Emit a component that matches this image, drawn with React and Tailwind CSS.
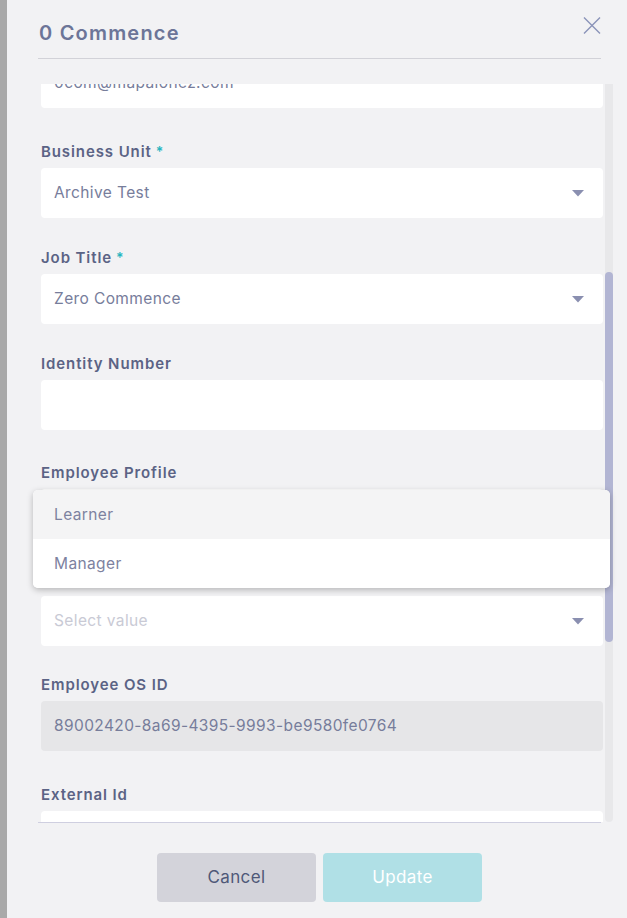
import React from "react";

const FONT = { fontFamily: "Inter, 'Open Sans', sans-serif" };

function Chevron() {
  return (
    <svg width="12" height="7" viewBox="0 0 12 7" className="shrink-0">
      <path d="M0 0 L12 0 L6 6.5 Z" fill="#8a8fb0" />
    </svg>
  );
}

function Label({ children, required }) {
  return (
    <div className="h-[20px] mb-[6px] flex items-center text-[15px] font-semibold tracking-[0.06em] text-[#5b6385] leading-[20px]">
      {children}
      {required && <span className="ml-[4px] text-[#25b5bf] text-[14px]">*</span>}
    </div>
  );
}

function Field({ label, required, value, placeholder, select, disabled, className = "" }) {
  return (
    <div className={className}>
      <Label required={required}>{label}</Label>
      <div
        className={`h-[50px] rounded-[4px] flex items-center justify-between pl-[13px] pr-[19px] ${
          disabled ? "bg-[#e6e6e8]" : "bg-white"
        }`}
      >
        <span
          className={`text-[15.5px] tracking-[0.025em] ${
            placeholder ? "text-[#c9cad5]" : "text-[#777d9b]"
          }`}
        >
          {value || placeholder}
        </span>
        {select && <Chevron />}
      </div>
    </div>
  );
}

export default function App() {
  return (
    <div className="w-[627px] h-[918px] flex overflow-hidden" style={FONT}>
      <div className="w-[7px] bg-[#a9a9a9] shrink-0" />
      <div className="relative flex-1 bg-[#f2f2f4] flex flex-col">
        {/* header */}
        <div className="flex items-start justify-between pl-[32px] pr-[26px] h-[58px]">
          <div className="mt-[20px] text-[20px] font-semibold tracking-[0.06em] text-[#6c7598] leading-[26px]">
            0 Commence
          </div>
          <svg width="18" height="17" viewBox="0 0 18 17" className="mt-[17px]">
            <path d="M1 0.5 L17 16.5 M17 0.5 L1 16.5" stroke="#8a93b8" strokeWidth="1.4" />
          </svg>
        </div>
        <div className="ml-[31px] w-[563px] h-px bg-[#d2d2d8]" />

        {/* scroll area */}
        <div className="mt-[25px] ml-[31px] flex h-[738px]">
          <div className="w-[565px] overflow-hidden pl-[3px]">
            <div className="mt-[-26px] w-[562px]">
              <div className="h-[50px] rounded-[4px] bg-white flex items-center pl-[13px]">
                <span className="text-[15.5px] tracking-[0.025em] text-[#777d9b]">0com@mapalonez.com</span>
              </div>
              <Field className="mt-[34px]" label="Business Unit" required value="Archive Test" select />
              <Field className="mt-[30px]" label="Job Title" required value="Zero Commence" select />
              <Field className="mt-[30px]" label="Identity Number" />
              <Field className="mt-[33px]" label="Employee Profile" select />
              <Field className="mt-[31px]" label="" placeholder="Select value" select />
              <Field className="mt-[29px]" label="Employee OS ID" value="89002420-8a69-4395-9993-be9580fe0764" disabled />
              <Field className="mt-[34px]" label="External Id" />
            </div>
          </div>
          <div className="ml-[2px] w-[8px] bg-[#e8e8ea] rounded-b-[4px] relative">
            <div className="absolute left-0 top-[188px] w-[8px] h-[370px] rounded-full bg-[#b2b5d3]" />
          </div>
        </div>
        <div className="ml-[31px] w-[563px] h-px bg-[#cfcfe0]" />

        {/* footer buttons */}
        <div className="mt-[30px] pl-[150px] flex gap-[7px]">
          <button className="w-[159px] h-[49px] rounded-[4px] bg-[#d3d3da] text-[#4f5878] text-[17px] tracking-[0.02em]">
            Cancel
          </button>
          <button className="w-[159px] h-[49px] rounded-[4px] bg-[#b0e0e6] text-white text-[17px] tracking-[0.02em]">
            Update
          </button>
        </div>

        {/* dropdown menu overlay */}
        <div className="absolute left-[26px] top-[490px] w-[577px] rounded-[5px] bg-white shadow-[0_2px_6px_rgba(0,0,0,0.25)] overflow-hidden">
          <div className="h-[49px] bg-[#f4f4f5] flex items-center pl-[21px] text-[15.5px] tracking-[0.025em] text-[#7d829f]">
            Learner
          </div>
          <div className="h-[49px] bg-white flex items-center pl-[21px] text-[15.5px] tracking-[0.025em] text-[#7d829f]">
            Manager
          </div>
        </div>
      </div>
    </div>
  );
}
